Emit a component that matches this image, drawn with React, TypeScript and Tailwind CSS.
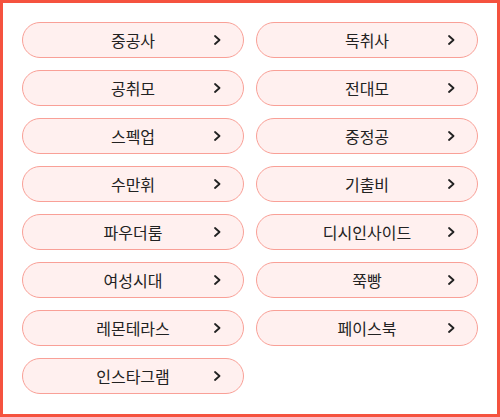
const sites = [
  "중공사",
  "독취사",
  "공취모",
  "전대모",
  "스펙업",
  "중정공",
  "수만휘",
  "기출비",
  "파우더룸",
  "디시인사이드",
  "여성시대",
  "쭉빵",
  "레몬테라스",
  "페이스북",
  "인스타그램",
];

function Chevron() {
  return (
    <svg width="7" height="10" viewBox="0 0 7 10" fill="none" className="shrink-0">
      <path d="M1 1l4.5 4L1 9" stroke="#222" strokeWidth="1.8" strokeLinecap="round" strokeLinejoin="round" />
    </svg>
  );
}

export default function App() {
  return (
    <div
      className="box-border w-[500px] h-[417px] border-[3px] border-[#f5523f] bg-white px-[19px] pt-[19px]"
      style={{ fontFamily: '"Noto Sans CJK KR", "Noto Sans", sans-serif' }}
    >
      <div className="grid grid-cols-2 gap-x-[12px] gap-y-[12px]">
        {sites.map((name) => (
          <button
            key={name}
            className="flex h-[36px] items-center rounded-full border border-[#f9a097] bg-[#fff0ef] px-[22px]"
          >
            <span className="w-[7px] shrink-0" />
            <span className="flex-1 text-center text-[16px] leading-none text-[#222]">{name}</span>
            <Chevron />
          </button>
        ))}
      </div>
    </div>
  );
}
